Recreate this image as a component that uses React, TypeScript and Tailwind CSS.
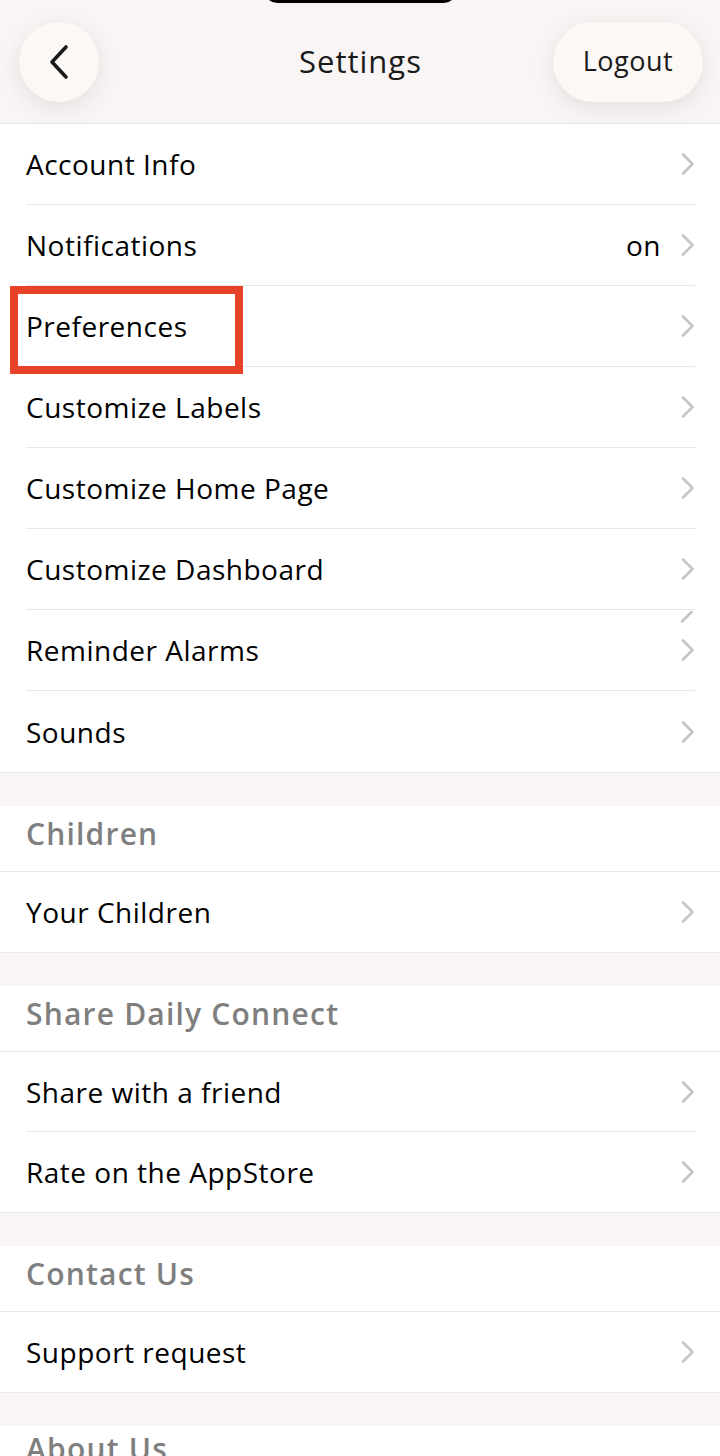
import React from 'react';

interface Row {
  label: string;
  value?: string;
}

const mainRows: Row[] = [
  { label: 'Account Info' },
  { label: 'Notifications', value: 'on' },
  { label: 'Preferences' },
  { label: 'Customize Labels' },
  { label: 'Customize Home Page' },
  { label: 'Customize Dashboard' },
  { label: 'Reminder Alarms' },
  { label: 'Sounds' },
];

const sections: { title: string; rows: Row[] }[] = [
  { title: 'Children', rows: [{ label: 'Your Children' }] },
  { title: 'Share Daily Connect', rows: [{ label: 'Share with a friend' }, { label: 'Rate on the AppStore' }] },
  { title: 'Contact Us', rows: [{ label: 'Support request' }] },
];

const Chevron: React.FC = () => (
  <svg width="14" height="24" viewBox="0 0 14 24" fill="none" className="shrink-0">
    <path d="M2 2.5 L11.5 12 L2 21.5" stroke="#c5c5c7" strokeWidth="2.6" strokeLinecap="round" strokeLinejoin="round" />
  </svg>
);

const SettingsRow: React.FC<{ row: Row; last: boolean; height: string; highlight?: boolean; artifact?: boolean }> = ({
  row,
  last,
  height,
  highlight,
  artifact,
}) => (
  <div className={`relative bg-white pl-[26px] ${last ? 'border-b border-[#e9e7e6]' : ''}`}>
    <div className={`flex items-center justify-between mr-[25px] ${height} ${last ? '' : 'border-b border-[#e9e7e6]'}`}>
      <span className="text-[28px] tracking-[0.5px] text-black">{row.label}</span>
      <div className="flex items-center gap-[20px]">
        {row.value && <span className="text-[28px] tracking-[0.5px] text-black">{row.value}</span>}
        <Chevron />
      </div>
    </div>
    {highlight && (
      <div className="absolute left-[10px] top-0 w-[233px] h-[88px] border-[8px] border-[#e8412a] z-10 pointer-events-none" />
    )}
    {artifact && (
      <svg width="14" height="12" viewBox="0 0 14 12" className="absolute top-[1px] right-[26px]">
        <path d="M2 10.5 L11.5 1" stroke="#c5c5c7" strokeWidth="2.6" strokeLinecap="round" />
      </svg>
    )}
  </div>
);

const App: React.FC = () => {
  return (
    <div className="w-[720px] h-[1456px] overflow-hidden bg-[#f8f5f4] relative" style={{ fontFamily: '"Open Sans", "Noto Sans", sans-serif' }}>
      {/* notch */}
      <div className="absolute left-[265px] top-[-10px] w-[191px] h-[13px] bg-black rounded-b-[12px] z-20" />

      {/* Header */}
      <header className="h-[124px] flex items-center justify-between px-[19px] border-b border-[#e6e3e2] bg-[#f8f5f4]">
        <button className="w-[80px] h-[80px] rounded-full bg-[#fbf8f6] shadow-[0_6px_24px_rgba(0,0,0,0.09)] flex items-center justify-center">
          <svg width="22" height="36" viewBox="0 0 22 36" fill="none">
            <path d="M18 3 L4 18 L18 33" stroke="#1a1a1a" strokeWidth="3.6" strokeLinecap="round" strokeLinejoin="round" />
          </svg>
        </button>
        <h1 className="text-[31px] tracking-[1px] text-[#1a1a1a] ml-[69px]">Settings</h1>
        <button className="w-[150px] h-[80px] -mr-[2px] rounded-[40px] bg-[#fbf8f6] shadow-[0_6px_24px_rgba(0,0,0,0.09)] text-[27px] tracking-[0.5px] text-[#1a1a1a]">
          Logout
        </button>
      </header>

      {/* Main group */}
      <div>
        {mainRows.map((r, i) => (
          <SettingsRow
            key={r.label}
            row={r}
            last={i === mainRows.length - 1}
            height="h-[81px]"
            highlight={r.label === 'Preferences'}
            artifact={r.label === 'Reminder Alarms'}
          />
        ))}
      </div>

      {sections.map((s) => (
        <div key={s.title} className="mt-[33px]">
          <div className="h-[66px] bg-white border-b border-[#e9e7e6] pl-[26px] flex items-center pb-[10px]">
            <span className="text-[30px] tracking-[1.2px] font-semibold text-[#7f7f7f]">{s.title}</span>
          </div>
          {s.rows.map((r, i) => (
            <SettingsRow key={r.label} row={r} last={i === s.rows.length - 1} height="h-[80px]" />
          ))}
        </div>
      ))}

      <div className="mt-[33px] h-[80px] bg-white pl-[26px] flex items-start">
        <span className="text-[30px] tracking-[1.2px] font-semibold text-[#7f7f7f]">About Us</span>
      </div>
    </div>
  );
};

export default App;
